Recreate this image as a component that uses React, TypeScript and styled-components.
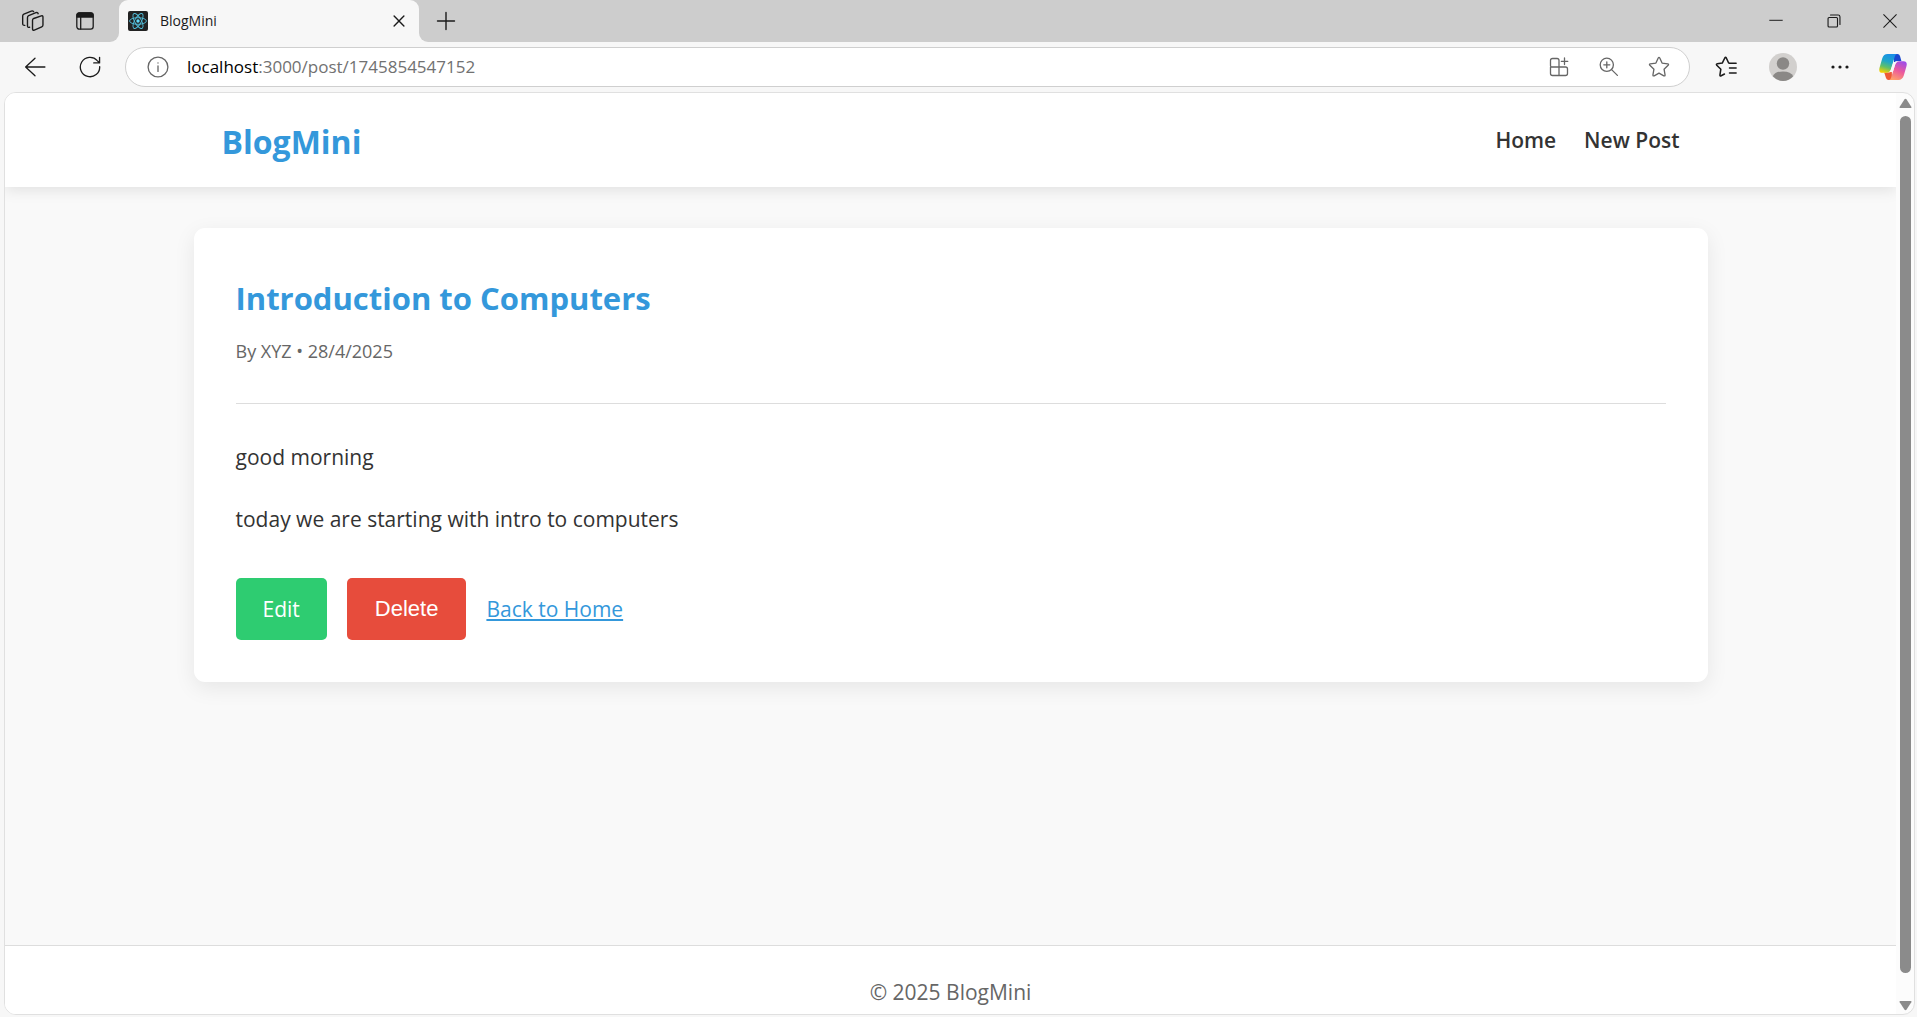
import React from "react";
import styled, { createGlobalStyle } from "styled-components";

const Global = createGlobalStyle`
  *, *::before, *::after { box-sizing: border-box; }
  html, body, #root { height: 100%; margin: 0; }
  body { overflow: hidden; background: #f7f7f7; font-family: "Open Sans", "Noto Sans", sans-serif; }
  button { font: inherit; cursor: pointer; }
`;

const Window = styled.div`
  display: flex;
  flex-direction: column;
  height: 100vh;
  padding-bottom: 2px;
`;

const TabStrip = styled.div`
  display: flex;
  height: 42px;
  background: #f7f7f7;
`;

const StripStart = styled.div`
  display: flex;
  align-items: center;
  gap: 8px;
  width: 119px;
  padding-left: 11px;
  background: #cdcdcd;
  border-bottom-right-radius: 9px;
`;

const TabWell = styled.div`
  flex: 0 0 300px;
  background: #cdcdcd;
`;

const Tab = styled.div`
  display: flex;
  align-items: center;
  height: 100%;
  padding: 0 9px;
  gap: 12px;
  background: #f7f7f7;
  border-radius: 9px 9px 0 0;
`;

const TabTitle = styled.span`
  flex: 1;
  font-size: 14px;
  line-height: 20px;
  color: #1b1b1b;
`;

const StripEnd = styled.div`
  display: flex;
  flex: 1;
  align-items: center;
  justify-content: space-between;
  padding-left: 7px;
  background: #cdcdcd;
  border-bottom-left-radius: 9px;
`;

const WindowControls = styled.div`
  display: flex;
`;

const IconButton = styled.button<{ $w?: number; $color?: string }>`
  display: flex;
  flex: none;
  align-items: center;
  justify-content: center;
  width: ${(p) => p.$w ?? 40}px;
  height: 38px;
  padding: 0;
  border: 0;
  background: transparent;
  color: ${(p) => p.$color ?? "#1b1b1b"};
`;

const Toolbar = styled.div`
  display: flex;
  align-items: center;
  height: 50px;
  padding-left: 7px;
`;

const AddressBar = styled.div`
  display: flex;
  flex: 1;
  align-items: center;
  height: 40px;
  margin: 0 7px 0 8px;
  padding: 0 5px 0 7px;
  border: 1px solid #cfcfcf;
  border-radius: 20px;
  background: #fff;
`;

const Address = styled.a`
  flex: 1;
  margin-left: 4px;
  font-size: 17px;
  line-height: 24px;
  color: #717171;
  text-decoration: none;
`;

const Host = styled.span`
  color: #000;
`;

const Viewport = styled.div`
  display: flex;
  flex: 1;
  min-height: 0;
  margin: 0 2px 0 4px;
  border: 1px solid #e0e0e0;
  border-radius: 12px;
  overflow: hidden;
  background: #fcfcfc;
`;

const Scroller = styled.div`
  flex: 1;
  overflow: hidden;
`;

const Page = styled.div`
  display: flex;
  flex-direction: column;
  min-height: calc(100% + 24px);
  background: #f9f9f9;
  color: #333;
  font-size: 21px;
  line-height: 36px;
`;

const ScrollTrack = styled.div`
  display: flex;
  flex-direction: column;
  align-items: center;
  justify-content: space-between;
  width: 18px;
  padding: 5px 0 3px;
`;

const Thumb = styled.div`
  flex: 1;
  width: 11px;
  margin: 7px 0 27px;
  border-radius: 6px;
  background: #8b8b8b;
`;

const SiteHeader = styled.header`
  background: #fff;
  box-shadow: 0 3px 14px rgba(0, 0, 0, 0.1);
`;

const HeaderInner = styled.div`
  display: flex;
  align-items: center;
  justify-content: space-between;
  max-width: 1514px;
  height: 94px;
  margin: 0 auto;
  padding: 0 28px;
`;

const Brand = styled.a`
  padding-top: 4px;
  font-size: 32px;
  font-weight: 700;
  line-height: 50px;
  color: #3498db;
  text-decoration: none;
`;

const Nav = styled.nav`
  display: flex;
  gap: 28px;
`;

const NavLink = styled.a`
  font-weight: 600;
  color: #333;
  text-decoration: none;
`;

const Main = styled.main`
  flex: 1;
  width: 100%;
  max-width: 1514px;
  margin: 0 auto;
  padding: 41px 0;
`;

const Card = styled.article`
  padding: 42px;
  border-radius: 11px;
  background: #fff;
  box-shadow: 0 6px 21px rgba(0, 0, 0, 0.08);
`;

const PostTitle = styled.h1`
  margin: 0 0 12px;
  font-size: 31px;
  line-height: 56px;
  color: #3498db;
`;

const Meta = styled.p`
  margin: 0;
  padding-bottom: 39px;
  border-bottom: 1px solid #ddd;
  font-size: 18px;
  line-height: 26px;
  color: #666;
`;

const Body = styled.div`
  padding: 35px 0 41px;
  p { margin: 0 0 26px; }
  p:last-child { margin: 0; }
`;

const Actions = styled.div`
  display: flex;
  align-items: center;
  gap: 20px;
`;

const EditLink = styled.a`
  padding: 13px 27px;
  border-radius: 5px;
  background: #2ecc71;
  color: #fff;
  text-decoration: none;
`;

const DeleteButton = styled.button`
  && {
    padding: 13px 28px;
    border: 0;
    border-radius: 5px;
    background: #e74c3c;
    color: #fff;
    font-family: "Liberation Sans", Arial, sans-serif;
    font-size: 22px;
    line-height: 36px;
  }
`;

const BackLink = styled.a`
  color: #3498db;
  text-decoration: underline;
`;

const SiteFooter = styled.footer`
  padding: 28px;
  border-top: 1px solid #ddd;
  background: #fff;
  text-align: center;
  color: #666;
`;

type LineIconProps = { size?: number; stroke?: number; children: React.ReactNode };

const LineIcon = ({ size = 20, stroke = 1.3, children }: LineIconProps) => (
  <svg width={size} height={size} viewBox="0 0 20 20" fill="none" stroke="currentColor" strokeWidth={stroke} strokeLinecap="round" strokeLinejoin="round" aria-hidden="true">
    {children}
  </svg>
);

const Workspaces = () => (
  <LineIcon size={24} stroke={1.15}>
    <path d="M9.6 9.4Q9.6 8.3 10.6 7.9L16.9 5.7Q18.3 5.3 18.3 6.7V13.4Q18.3 14.5 17.3 14.9L11.1 17.6Q9.6 18.1 9.6 16.7Z" />
    <path d="M7.2 15.2Q5.4 15.7 5.4 14.2V7.2Q5.4 6.1 6.4 5.6L12.4 3.1Q13.9 2.6 14.3 3.9" />
    <path d="M3.2 13.6Q1.4 13.8 1.4 12.3V5.8Q1.4 4.7 2.4 4.2L8.6 1.7Q9.9 1.3 10.5 2.2" />
  </LineIcon>
);

const TabActions = () => (
  <LineIcon size={20}>
    <rect x="1.8" y="1.8" width="16.4" height="16.4" rx="2.6" />
    <path d="M2 6V4.4Q2 2 4.4 2H15.6Q18 2 18 4.4V6Z" fill="currentColor" />
    <path d="M5.7 6V18" />
  </LineIcon>
);

const ReactMark = () => (
  <svg width="20" height="20" viewBox="0 0 20 20" fill="none" stroke="#53c1de" strokeWidth="0.9" aria-hidden="true">
    <rect width="20" height="20" rx="2" fill="#222" stroke="none" />
    <ellipse cx="10" cy="10" rx="8.4" ry="3.3" />
    <ellipse cx="10" cy="10" rx="8.4" ry="3.3" transform="rotate(60 10 10)" />
    <ellipse cx="10" cy="10" rx="8.4" ry="3.3" transform="rotate(120 10 10)" />
    <circle cx="10" cy="10" r="1.7" fill="#61dafb" stroke="none" />
  </svg>
);

const STAR = "M9.3 1.8Q10 .6 10.7 1.8L12.8 6.4L17.9 7.1Q19.2 7.4 18.3 8.4L14.6 12L15.5 17.2Q15.6 18.5 14.4 18L10 15.6L5.6 18Q4.4 18.5 4.5 17.2L5.4 12L1.7 8.4Q.8 7.4 2.1 7.1L7.2 6.4Z";

const Copilot = () => (
  <svg width="28" height="26" viewBox="0 0 28 26" aria-hidden="true">
    <defs>
      <linearGradient id="cool" x1="0.6" y1="0" x2="0.3" y2="1">
        <stop offset="0" stopColor="#1a8fe8" />
        <stop offset="0.4" stopColor="#1fa6c9" />
        <stop offset="0.7" stopColor="#5fc06a" />
        <stop offset="1" stopColor="#f5d000" />
      </linearGradient>
      <linearGradient id="warm" x1="0.7" y1="0" x2="0.3" y2="1">
        <stop offset="0" stopColor="#a04de6" />
        <stop offset="0.5" stopColor="#ec5a9c" />
        <stop offset="1" stopColor="#ffa16b" />
      </linearGradient>
    </defs>
    <path d="M15 0H18.5Q20.4 0 21 2L22.4 7H18Q15.8 7 15 9.4Z" fill="#1b48d0" />
    <path d="M13 26H9.6Q7.6 26 7 24L5.2 18.6H10Q12 18.6 12.8 16Z" fill="#ee5a34" />
    <path d="M8.6 0H18Q16.4 .4 15.8 2.6L11.8 15.6Q10.8 18.8 7.6 18.8H3.4Q-.8 18.8 .6 13.6L3.2 4.4Q4.6 0 8.6 0Z" fill="url(#cool)" />
    <path d="M19.4 26H10Q11.6 25.6 12.2 23.4L16.2 10.4Q17.2 7.2 20.4 7.2H24.6Q28.8 7.2 27.4 12.4L24.8 21.6Q23.4 26 19.4 26Z" fill="url(#warm)" />
    <path d="M14.6 8H18.2Q16.8 8.6 16.2 10.4L13.8 18H10.2Q11.4 17.4 12 15.6Z" fill="#f7f7f7" />
  </svg>
);

const Arrow = ({ down }: { down?: boolean }) => (
  <svg width="13" height="11" viewBox="0 0 13 11" fill="#8b8b8b" aria-hidden="true">
    <path d={down ? "M1.2 1H11.8Q13 1 12.3 2.2L7.6 9.4Q6.5 11 5.4 9.4L.7 2.2Q0 1 1.2 1Z" : "M1.2 10H11.8Q13 10 12.3 8.8L7.6 1.6Q6.5 0 5.4 1.6L.7 8.8Q0 10 1.2 10Z"} />
  </svg>
);

export default function App() {
  return (
    <>
      <Global />
      <Window>
        <TabStrip>
          <StripStart>
            <IconButton $w={44} aria-label="Workspaces"><Workspaces /></IconButton>
            <IconButton $w={44} aria-label="Tab actions menu"><TabActions /></IconButton>
          </StripStart>
          <TabWell>
            <Tab>
              <ReactMark />
              <TabTitle>BlogMini</TabTitle>
              <IconButton $w={22} aria-label="Close tab">
                <LineIcon size={14} stroke={2}><path d="M3 3L17 17M17 3L3 17" /></LineIcon>
              </IconButton>
            </Tab>
          </TabWell>
          <StripEnd>
            <IconButton aria-label="New tab">
              <LineIcon size={20} stroke={1.4}><path d="M10 1.5V18.5M1.5 10H18.5" /></LineIcon>
            </IconButton>
            <WindowControls>
              <IconButton $w={58} aria-label="Minimize">
                <LineIcon size={14} stroke={1.4}><path d="M1 9H19" /></LineIcon>
              </IconButton>
              <IconButton $w={58} aria-label="Restore">
                <LineIcon size={14} stroke={1.6}>
                  <rect x="1.5" y="5" width="13.5" height="13.5" rx="1.5" />
                  <path d="M5 1.5H16Q18.5 1.5 18.5 4V15" />
                </LineIcon>
              </IconButton>
              <IconButton $w={54} aria-label="Close">
                <LineIcon size={14} stroke={1.5}><path d="M1 1L19 19M19 1L1 19" /></LineIcon>
              </IconButton>
            </WindowControls>
          </StripEnd>
        </TabStrip>

        <Toolbar>
          <IconButton $w={56} aria-label="Back">
            <LineIcon size={22} stroke={1.2}><path d="M10 2L1.5 10L10 18M1.5 10H19" /></LineIcon>
          </IconButton>
          <IconButton $w={54} aria-label="Refresh">
            <LineIcon size={22} stroke={1.2}><path d="M18.8 9.6A8.8 8.8 0 1 1 16.6 4.2L18.5 6.2M18.7 1.2V6.3H13.4" /></LineIcon>
          </IconButton>
          <AddressBar>
            <IconButton $w={50} $color="#666" aria-label="View site information">
              <LineIcon size={22} stroke={1.2}><circle cx="10" cy="10" r="9" /><path d="M10 9V14M10 6.2V6.4" /></LineIcon>
            </IconButton>
            <Address href="#"><Host>localhost</Host>:3000/post/1745854547152</Address>
            <IconButton $w={50} $color="#666" aria-label="Apps">
              <LineIcon size={20}>
                <path d="M10 10H3Q1.5 10 1.5 8.5V3.5Q1.5 1.5 3.5 1.5H8Q10 1.5 10 3.5ZM1.5 10V16.5Q1.5 18.5 3.5 18.5H10V10M10 10H16.5Q18.5 10 18.5 12V16.5Q18.5 18.5 16.5 18.5H10M15.5 1V7.5M12.3 4.3H18.8" />
              </LineIcon>
            </IconButton>
            <IconButton $w={50} $color="#666" aria-label="Zoom">
              <LineIcon size={20}><circle cx="7.8" cy="7.8" r="6.6" /><path d="M12.6 12.6L18.4 18.4M7.8 4.8V10.8M4.8 7.8H10.8" /></LineIcon>
            </IconButton>
            <IconButton $w={50} $color="#666" aria-label="Add to favorites">
              <LineIcon size={22} stroke={1.2}><path d={STAR} /></LineIcon>
            </IconButton>
          </AddressBar>
          <IconButton $w={57} aria-label="Favorites">
            <LineIcon size={22} stroke={1.4}>
              <path d="M8.6 16.4L5.6 18Q4.3 18.6 4.5 17.2L5.3 12L1.6 8.4Q.8 7.4 2.1 7.1L6.6 6.4L8.9 1.8Q9.6 .7 10.3 1.8L12.4 6.4M13 6.6H19.2M13.2 11H19.2M13.2 15.4H19.2" />
            </LineIcon>
          </IconButton>
          <IconButton $w={57} aria-label="Profile">
            <svg width="28" height="28" viewBox="0 0 28 28" aria-hidden="true">
              <circle cx="14" cy="14" r="14" fill="#d2d0ce" />
              <circle cx="14" cy="10.5" r="6.2" fill="#8a8886" />
              <path d="M3.8 23.3Q6 18.4 14 18.4T24.2 23.3Q20 28 14 28T3.8 23.3Z" fill="#8a8886" />
            </svg>
          </IconButton>
          <IconButton $w={57} aria-label="Settings and more">
            <svg width="18" height="18" viewBox="0 0 18 18" fill="#1b1b1b" aria-hidden="true">
              <circle cx="2" cy="9" r="1.6" /><circle cx="9" cy="9" r="1.6" /><circle cx="16" cy="9" r="1.6" />
            </svg>
          </IconButton>
          <IconButton $w={49} aria-label="Copilot"><Copilot /></IconButton>
        </Toolbar>

        <Viewport>
          <Scroller>
            <Page>
              <SiteHeader>
                <HeaderInner>
                  <Brand href="#">BlogMini</Brand>
                  <Nav>
                    <NavLink href="#">Home</NavLink>
                    <NavLink href="#">New Post</NavLink>
                  </Nav>
                </HeaderInner>
              </SiteHeader>
              <Main>
                <Card>
                  <PostTitle>Introduction to Computers</PostTitle>
                  <Meta>By XYZ • 28/4/2025</Meta>
                  <Body>
                    <p>good morning</p>
                    <p>today we are starting with intro to computers</p>
                  </Body>
                  <Actions>
                    <EditLink href="#">Edit</EditLink>
                    <DeleteButton type="button">Delete</DeleteButton>
                    <BackLink href="#">Back to Home</BackLink>
                  </Actions>
                </Card>
              </Main>
              <SiteFooter>© 2025 BlogMini</SiteFooter>
            </Page>
          </Scroller>
          <ScrollTrack>
            <Arrow />
            <Thumb />
            <Arrow down />
          </ScrollTrack>
        </Viewport>
      </Window>
    </>
  );
}
